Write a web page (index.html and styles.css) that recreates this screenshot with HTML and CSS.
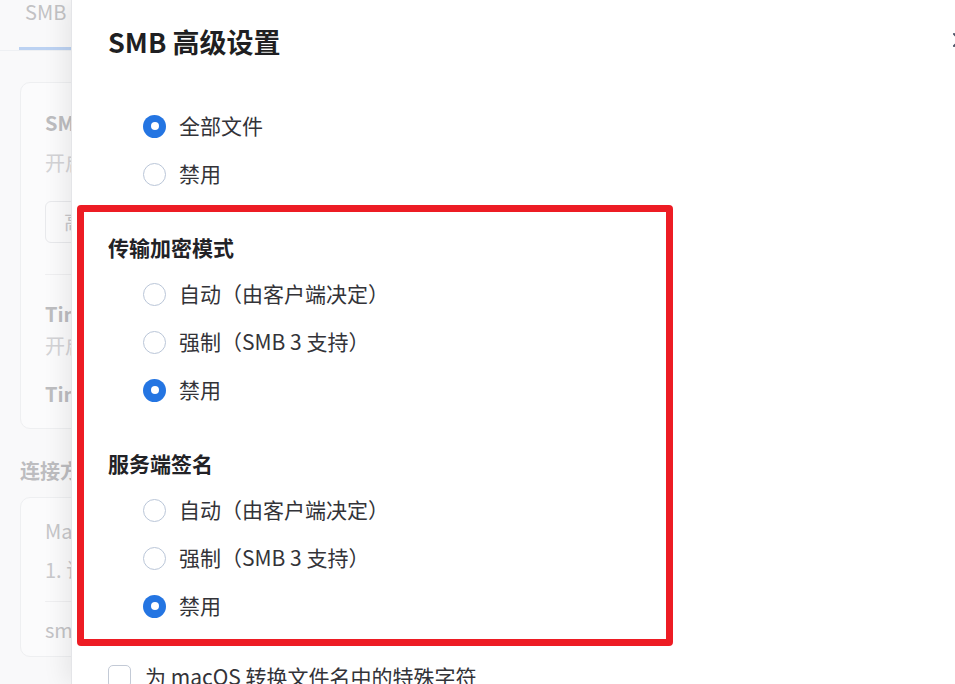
FILE: index.html
```html
<!DOCTYPE html>
<html lang="zh-CN">
<head>
<meta charset="utf-8">
<title>SMB 高级设置</title>
<link rel="stylesheet" href="styles.css">
</head>
<body>
<div class="page">
  <div class="tabs">
    <div class="tab active">SMB</div>
  </div>
  <div class="content">
    <div class="card card-main">
      <div class="item">
        <div class="item-title">SMB 服务</div>
        <div class="item-desc">开启后，可以通过 SMB 协议访问共享文件夹</div>
        <div class="btn">高级设置</div>
      </div>
      <div class="divider"></div>
      <div class="item">
        <div class="item-title after-divider">Time Machine</div>
        <div class="item-desc tight">开启后，可以使用 Time Machine 备份 Mac</div>
        <div class="item-title second">Time Machine 备份位置</div>
      </div>
    </div>
    <div class="section-title">连接方式</div>
    <div class="card card-conn">
      <div class="conn-title">Mac</div>
      <div class="conn-desc">1. 请在访达中选择“前往”-“连接服务器”</div>
      <div class="divider"></div>
      <div class="conn-addr">smb://192.168.1.10</div>
    </div>
  </div>
</div>

<div class="drawer">
  <div class="drawer-header">
    <div class="drawer-title">SMB 高级设置</div>
    <div class="close">
      <svg width="16" height="16" viewBox="0 0 16 16"><path d="M2 2L14 14M14 2L2 14" stroke="#4a5366" stroke-width="2" stroke-linecap="round"/></svg>
    </div>
  </div>
  <div class="drawer-body">
    <div class="group">
      <div class="radio"><span class="dot checked"></span><span class="label">全部文件</span></div>
      <div class="radio"><span class="dot"></span><span class="label">禁用</span></div>
    </div>
    <div class="group spaced">
      <div class="group-title">传输加密模式</div>
      <div class="radio"><span class="dot"></span><span class="label">自动（由客户端决定）</span></div>
      <div class="radio"><span class="dot"></span><span class="label">强制（SMB 3 支持）</span></div>
      <div class="radio"><span class="dot checked"></span><span class="label">禁用</span></div>
    </div>
    <div class="group spaced">
      <div class="group-title">服务端签名</div>
      <div class="radio"><span class="dot"></span><span class="label">自动（由客户端决定）</span></div>
      <div class="radio"><span class="dot"></span><span class="label">强制（SMB 3 支持）</span></div>
      <div class="radio"><span class="dot checked"></span><span class="label">禁用</span></div>
    </div>
    <div class="check spaced"><span class="box"></span><span class="label">为 macOS 转换文件名中的特殊字符</span></div>
  </div>
</div>

<div class="highlight"></div>
</body>
</html>
```

FILE: styles.css
```css
* { box-sizing: border-box; }

html, body {
  margin: 0;
  padding: 0;
  width: 955px;
  height: 684px;
  overflow: hidden;
  font-family: "Noto Sans CJK SC", "Noto Sans", sans-serif;
}

body {
  background: #f9f9fa;
  position: relative;
}

/* background page (under the drawer) */
.page {
  width: 955px;
  height: 684px;
  color: #c3c3c5;
  white-space: nowrap;
}

.tabs {
  height: 51px;
  border-bottom: 1px solid #eef0f3;
  display: flex;
  padding-left: 19px;
}

.tab {
  font-size: 20px;
  line-height: 24px;
  padding: 0 6px;
  height: 50px;
  color: #c2c2c4;
}

.tab.active {
  border-bottom: 3px solid #bcd2f2;
}

.content {
  padding: 31px 0 0 20px;
}

.card {
  background: #fbfbfc;
  border: 1px solid #eeeff1;
  border-radius: 10px;
  width: 700px;
}

.card-main {
  height: 347px;
  padding: 0 24px;
}

.item {
  display: flex;
  flex-direction: column;
}

.item-title {
  font-size: 20px;
  font-weight: 700;
  color: #bdbdc0;
  line-height: 30px;
  margin-top: 25px;
}

.item-title.after-divider {
  margin-top: 24px;
}

.item-title.second {
  margin-top: 18px;
}

.item-desc {
  font-size: 20px;
  color: #d3d3d6;
  line-height: 30px;
  margin-top: 10px;
}

.item-desc.tight {
  margin-top: 2px;
}

.btn {
  margin-top: 23px;
  width: 140px;
  height: 42px;
  border: 1px solid #e8e9ec;
  border-radius: 6px;
  font-size: 20px;
  line-height: 40px;
  padding-left: 18px;
  color: #c8c8cb;
}

.divider {
  height: 1px;
  background: #efeff1;
  margin-top: 31px;
}

.section-title {
  font-size: 20px;
  font-weight: 700;
  color: #bdbdc0;
  line-height: 30px;
  margin-top: 27px;
}

.card-conn {
  margin-top: 11px;
  height: 160px;
  padding: 0 24px;
}

.conn-title {
  font-size: 20px;
  color: #c6c6c9;
  line-height: 30px;
  margin-top: 18px;
}

.conn-desc {
  font-size: 20px;
  color: #c9c9cc;
  line-height: 30px;
  margin-top: 9px;
}

.card-conn .divider {
  margin-top: 16px;
}

.conn-addr {
  font-size: 20px;
  color: #c3c3c6;
  line-height: 30px;
  margin-top: 13px;
}

/* drawer */
.drawer {
  position: absolute;
  top: 0;
  left: 71px;
  width: 920px;
  height: 684px;
  background: #ffffff;
  border-left: 1px solid #e4e5e8;
  box-shadow: -6px 0 22px rgba(0, 0, 0, 0.08);
  padding-left: 36px;
}

.drawer-header {
  height: 84px;
  display: flex;
  align-items: center;
  justify-content: space-between;
  padding-right: 23px;
}

.drawer-title {
  font-size: 27px;
  font-weight: 700;
  color: #1f1f22;
  line-height: 36px;
}

.close {
  width: 16px;
  height: 16px;
  display: flex;
  margin-top: -4px;
}

.drawer-body {
  padding-top: 18px;
  display: flex;
  flex-direction: column;
}

.group {
  display: flex;
  flex-direction: column;
}

.spaced {
  margin-top: 35px;
}

.group-title {
  font-size: 21px;
  font-weight: 700;
  color: #222226;
  line-height: 28px;
  margin-bottom: 9px;
}

.radio {
  height: 48px;
  display: flex;
  align-items: center;
  gap: 13px;
  padding-left: 35px;
}

.label {
  font-size: 21px;
  line-height: 28px;
  color: #333338;
  white-space: nowrap;
  margin-bottom: 3px;
}

.dot {
  width: 23px;
  height: 23px;
  border-radius: 50%;
  border: 1.5px solid #bac6d8;
  background: #fff;
  flex: none;
  display: flex;
  align-items: center;
  justify-content: center;
}

.dot.checked {
  border: none;
  background: #2475e2;
}

.dot.checked::after {
  content: "";
  width: 8px;
  height: 8px;
  border-radius: 50%;
  background: #fff;
}

.check {
  display: flex;
  align-items: flex-start;
  gap: 14px;
  height: 30px;
}

.box {
  width: 23px;
  height: 23px;
  border: 1.5px solid #c3cad6;
  border-radius: 5px;
  flex: none;
}

.check .label {
  margin-top: -3px;
}

/* annotation overlay */
.highlight {
  position: absolute;
  left: 77px;
  top: 205px;
  width: 596px;
  height: 441px;
  border: 7px solid #ed1c24;
  border-radius: 4px;
  pointer-events: none;
}
```
